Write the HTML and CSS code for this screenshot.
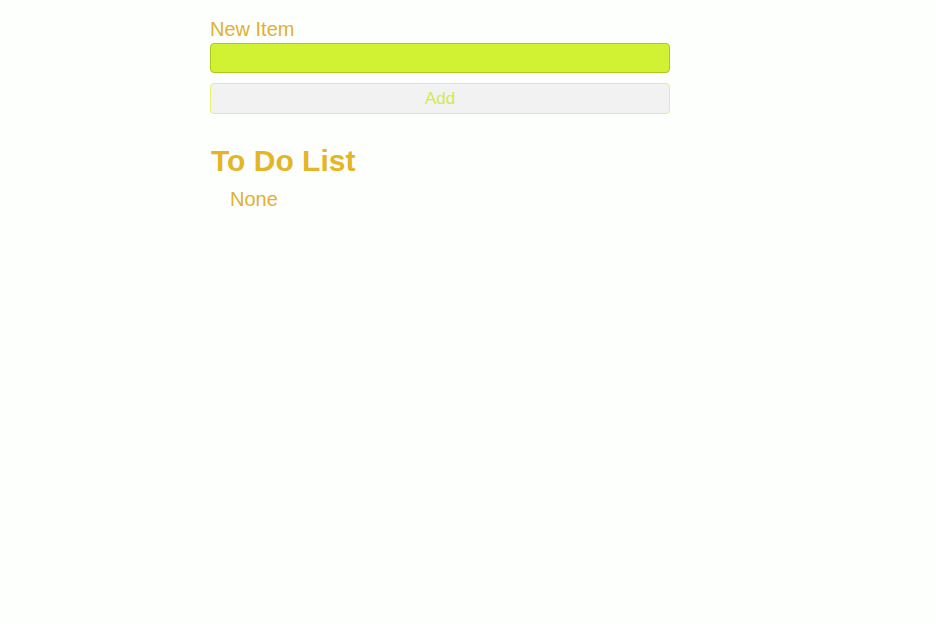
FILE: index.html
```html
<!DOCTYPE html>
<html>
<head>
<meta charset="utf-8">
<link rel="stylesheet" href="styles.css">
</head>
<body>
<main class="app">
  <form class="new-item">
    <label class="label" for="item">New Item</label>
    <input class="input" id="item" type="text">
    <button class="add" type="button">Add</button>
  </form>
  <h1 class="title">To Do List</h1>
  <ul class="list">
    <li class="empty">None</li>
  </ul>
</main>
</body>
</html>
```
FILE: styles.css
```css
html, body {
  margin: 0;
  padding: 0;
  background: #fdfffd;
  font-family: "Liberation Sans", Arial, sans-serif;
}
.app {
  width: 460px;
  margin-left: 210px;
  padding-top: 18px;
}
.new-item {
  display: flex;
  flex-direction: column;
  margin: 0;
}
.label {
  font-size: 20px;
  line-height: 23px;
  color: #e2b032;
  margin-bottom: 2px;
}
.input {
  box-sizing: border-box;
  height: 30px;
  width: 100%;
  margin: 0;
  padding: 0 8px;
  background: #d1f232;
  border: 1px solid #a9cc1c;
  border-radius: 4px;
  outline: none;
}
.add {
  box-sizing: border-box;
  height: 31px;
  width: 100%;
  margin: 10px 0 0;
  background: #f2f2f2;
  border: 1px solid #e9f070;
  border-radius: 4px;
  color: #d3ea4a;
  font-family: "Liberation Sans", Arial, sans-serif;
  font-size: 17px;
  line-height: 29px;
  padding: 0;
}
.title {
  margin: 29px 0 0;
  padding-left: 1px;
  font-size: 30px;
  line-height: 36px;
  font-weight: bold;
  color: #e4b626;
}
.list {
  list-style: none;
  margin: 9px 0 0;
  padding: 0 0 0 20px;
}
.empty {
  font-size: 20px;
  line-height: 23px;
  color: #e2b032;
}
```
